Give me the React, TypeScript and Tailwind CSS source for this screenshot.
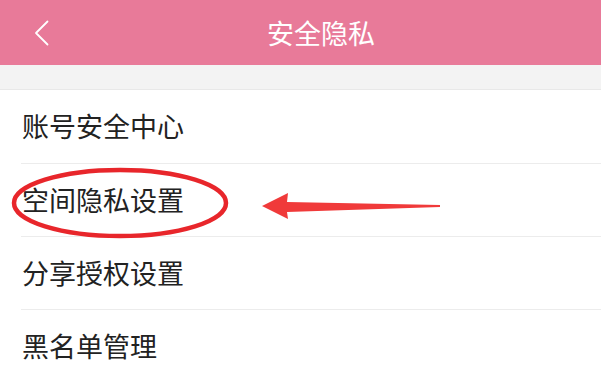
import React from "react";

const items = ["账号安全中心", "空间隐私设置", "分享授权设置", "黑名单管理"];

export default function App() {
  return (
    <div
      className="relative w-[601px] h-[375px] overflow-hidden bg-white"
      style={{ fontFamily: '"Noto Sans CJK SC", "Noto Sans", sans-serif' }}
    >
      <div className="flex items-center h-[65px] bg-[#e87a99] pl-[34px]">
        <svg width="15" height="26" viewBox="0 0 15 26" fill="none">
          <path d="M13.5 1.5 L2 13 L13.5 24.5" stroke="white" strokeWidth="1.8" strokeLinecap="round" strokeLinejoin="round" />
        </svg>
        <h1 className="ml-[218px] text-[27px] leading-none text-white">安全隐私</h1>
      </div>
      <div className="h-[25px] bg-[#f3f3f3] border-b border-[#e8e8e8]" />
      <ul>
        {items.map((t, i) => (
          <li key={t} className="pl-[21px]">
            <div
              className={`flex items-center ${i === 0 ? "h-[74px]" : "h-[73px]"} text-[27px] text-[#222] ${i < items.length - 1 ? "border-b border-[#ececec]" : ""}`}
            >
              <span className="pl-[1px]">{t}</span>
            </div>
          </li>
        ))}
      </ul>

      {/* red annotation overlay */}
      <svg className="absolute left-0 top-0 pointer-events-none" width="601" height="375">
        <ellipse cx="120" cy="203" rx="106" ry="33" fill="none" stroke="#e8262b" strokeWidth="4.5" />
        <path d="M262 206 L288 193 L287 202 L440 205 L440 207 L287 212 L288 219 Z" fill="#f03a3a" />
      </svg>
    </div>
  );
}
